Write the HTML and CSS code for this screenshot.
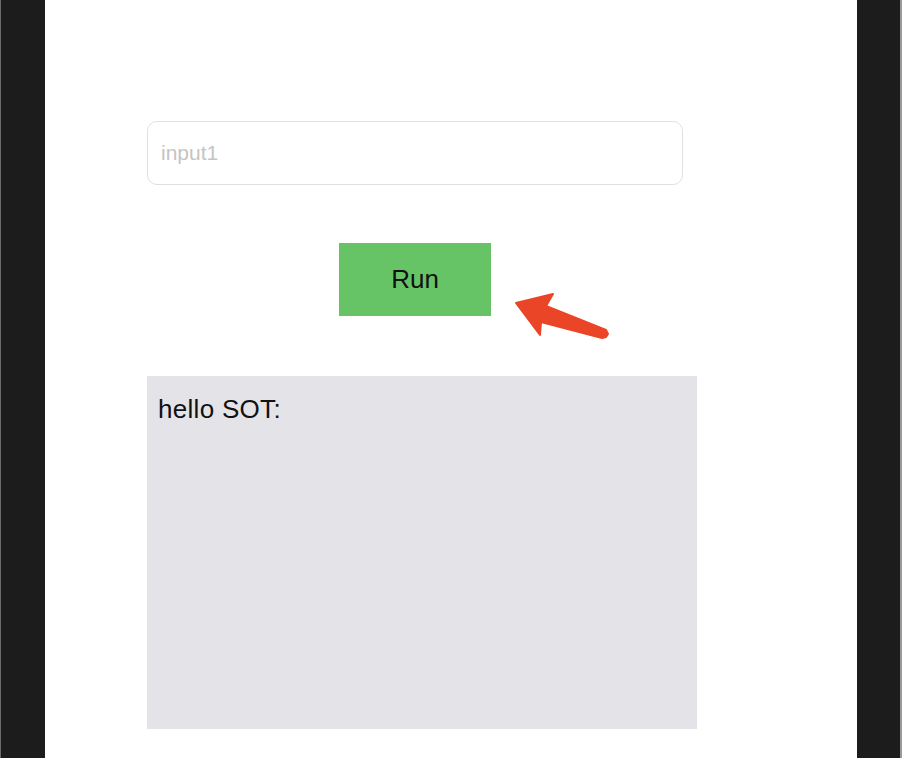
FILE: index.html
```html
<!DOCTYPE html>
<html lang="en">
<head>
    <meta charset="UTF-8">
    <meta name="viewport" content="width=device-width, initial-scale=1.0">
    <title>Run demo</title>
    <link rel="stylesheet" href="styles.css">
</head>
<body>
    <div class="frame frame-left"></div>

    <div class="page">
        <div class="content">
            <input class="text-input" type="text" placeholder="input1">

            <div class="run-row">
                <button class="run-btn">Run</button>
                <svg class="pointer" width="104" height="56" viewBox="0 0 104 56">
                    <polygon points="6,15 43,6 36,18 96,42 98,46 96,49 92,50 31,34 30,47"
                             fill="#ea4527" stroke="#ea4527" stroke-width="2" stroke-linejoin="round"/>
                </svg>
            </div>

            <div class="output">hello SOT:</div>
        </div>
    </div>

    <div class="frame frame-right"></div>
</body>
</html>
```

FILE: styles.css
```css
:root {
    --frame-color: #1c1c1c;
    --green: #66c466;
    --output-bg: #e4e3e8;
}

* {
    margin: 0;
    padding: 0;
    box-sizing: border-box;
}

body {
    display: flex;
    height: 758px;
    overflow: hidden;
    font-family: "Liberation Sans", Arial, sans-serif;
    color: #111;
    background: var(--frame-color);
}

.frame {
    background: var(--frame-color);
    flex-shrink: 0;
}

.frame-left {
    width: 45px;
    border-left: 1px solid #6a6a6a;
}

.frame-right {
    width: 45px;
    border-right: 2px solid #9a9a9a;
}

.page {
    flex: 1;
    background: #fff;
    padding: 121px 0 0 102px;
}

.content {
    width: 536px;
    display: flex;
    flex-direction: column;
}

.text-input {
    height: 64px;
    width: 536px;
    border: 1px solid #e0e0e0;
    border-radius: 10px;
    padding: 0 13px;
    font-family: inherit;
    font-size: 21px;
    outline: none;
}

.text-input::placeholder {
    color: #c4c4c4;
}

.run-row {
    position: relative;
    display: flex;
    justify-content: center;
    margin-top: 58px;
}

.run-btn {
    width: 152px;
    height: 73px;
    border: none;
    background: var(--green);
    font-family: inherit;
    font-size: 26px;
    color: #111;
}

.pointer {
    position: absolute;
    left: 363px;
    top: 45px;
}

.output {
    margin-top: 60px;
    width: 550px;
    height: 353px;
    background: var(--output-bg);
    padding: 18px 11px;
    font-size: 26px;
    letter-spacing: 0.3px;
}
```
